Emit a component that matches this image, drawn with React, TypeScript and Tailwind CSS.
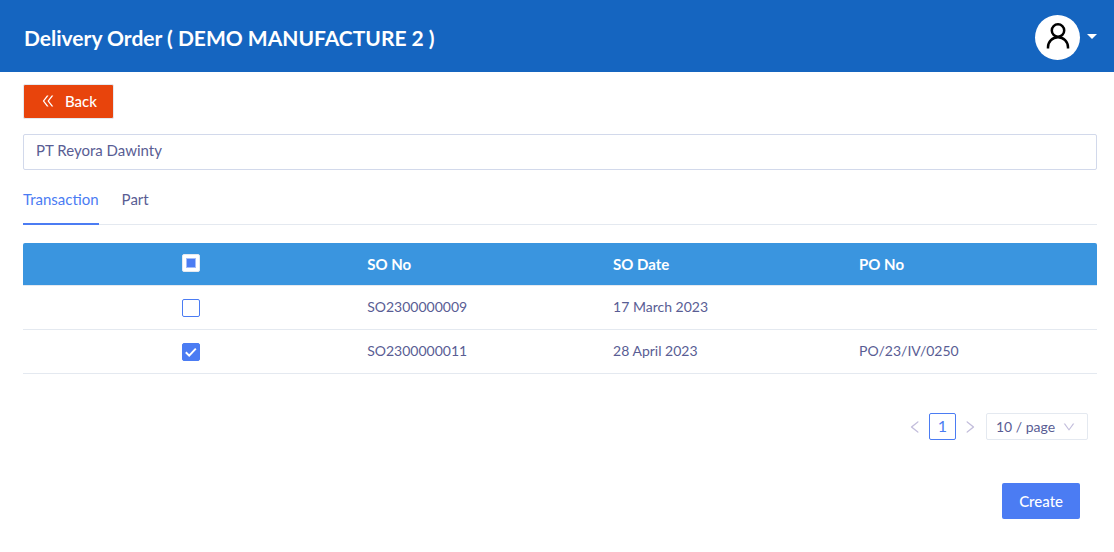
import React, { useState } from "react";
import { AiOutlineDoubleLeft, AiOutlineDown, AiOutlineLeft, AiOutlineRight } from "react-icons/ai";

type SalesOrder = {
    soNo: string;
    soDate: string;
    poNo: string;
};

const orders: SalesOrder[] = [
    { soNo: "SO2300000009", soDate: "17 March 2023", poNo: "" },
    { soNo: "SO2300000011", soDate: "28 April 2023", poNo: "PO/23/IV/0250" },
];

const tabs = ["Transaction", "Part"];

function UserIcon() {
    return (
        <svg width="24" height="30" viewBox="0 0 24 30" fill="none" stroke="black" strokeWidth="2.5" aria-hidden="true">
            <circle cx="12" cy="7.5" r="6.2" />
            <path d="M2 25.5v-1.3a10 10 0 0 1 20 0v1.3" />
        </svg>
    );
}

function CheckBox({ checked, label, onChange }: { checked: boolean; label: string; onChange: () => void }) {
    return (
        <span className="relative mx-auto block size-[18px]">
            <input
                type="checkbox"
                aria-label={label}
                checked={checked}
                onChange={onChange}
                className="block size-[18px] appearance-none rounded-xs border border-[#4b7cf3] bg-white checked:bg-[#4b7cf3]"
            />
            {checked && (
                <svg className="pointer-events-none absolute inset-0" width="18" height="18" viewBox="0 0 18 18" fill="none" stroke="white" strokeWidth="2" aria-hidden="true">
                    <path d="M3.8 9.2l3.4 3.4L13.8 5.6" />
                </svg>
            )}
        </span>
    );
}

export default function DeliveryOrderPage() {
    const [activeTab, setActiveTab] = useState("Transaction");
    const [customer, setCustomer] = useState("PT Reyora Dawinty");
    const [selected, setSelected] = useState<string[]>(["SO2300000011"]);

    const allSelected = selected.length === orders.length;

    const toggle = (soNo: string) => {
        setSelected(selected.includes(soNo) ? selected.filter((s) => s !== soNo) : [...selected, soNo]);
    };

    return (
        <div className="min-h-screen bg-white font-['Lato',sans-serif] text-[15px] leading-5 text-[#595d94]">
            <header className="flex h-18 items-center justify-between bg-[#1565c0] pr-[17px] pl-6">
                <h1 className="pt-1 text-[21px] leading-8 font-bold text-white">Delivery Order ( DEMO MANUFACTURE 2 )</h1>
                <button type="button" aria-label="Account" className="flex items-center gap-[7px] pt-[3px]">
                    <span className="flex size-[45px] items-center justify-center rounded-full bg-white">
                        <UserIcon />
                    </span>
                    <svg width="10" height="8" viewBox="0 0 10 8" fill="white" aria-hidden="true">
                        <path d="M0 0h10L5 5z" />
                    </svg>
                </button>
            </header>

            <main className="pt-3 pr-[17px] pb-8 pl-[23px]">
                <button type="button" className="flex h-[35px] items-center gap-[9px] rounded-xs border border-[#e4e9f0] bg-[#e8440c] px-4 pb-0.5 font-medium text-white">
                    <AiOutlineDoubleLeft size={16} />
                    Back
                </button>

                <input
                    type="text"
                    aria-label="Customer"
                    value={customer}
                    onChange={(e) => setCustomer(e.target.value)}
                    className="mt-[15px] block h-9 w-full rounded-xs border border-[#d2d9eb] px-3 pb-1"
                />

                {/* Tabs */}
                <div role="tablist" className="mt-2 flex gap-[23px] border-b border-[#e4e9f0]">
                    {tabs.map((tab) => (
                        <button
                            key={tab}
                            type="button"
                            role="tab"
                            aria-selected={activeTab === tab}
                            onClick={() => setActiveTab(tab)}
                            className={`-mb-px h-[47px] border-b-2 pb-1 ${activeTab === tab ? "border-[#4b7cf3] text-[#4b7cf3]" : "border-transparent"}`}
                        >
                            {tab}
                        </button>
                    ))}
                </div>

                <table className="mt-[18px] w-full table-fixed border-separate border-spacing-0 text-left">
                    <thead>
                        <tr className="h-[43px] text-white">
                            <th className="w-[31.3%] rounded-tl-xs border-b border-[#e4e9f0] bg-[#3a95df] px-2 pb-0.5">
                                <span className="relative mx-auto block size-[18px]">
                                    <input
                                        type="checkbox"
                                        aria-label="Select all"
                                        checked={allSelected}
                                        onChange={() => setSelected(allSelected ? [] : orders.map((o) => o.soNo))}
                                        className="block size-[18px] appearance-none rounded-xs border border-[#e4e9f0] bg-white"
                                    />
                                    {selected.length > 0 && <span className="pointer-events-none absolute inset-1 border border-[#a5bdf9] bg-[#4b7cf3]" />}
                                </span>
                            </th>
                            <th className="border-b border-[#e4e9f0] bg-[#3a95df] px-2 font-bold">SO No</th>
                            <th className="border-b border-[#e4e9f0] bg-[#3a95df] px-2 font-bold">SO Date</th>
                            <th className="rounded-tr-xs border-b border-[#e4e9f0] bg-[#3a95df] px-2 font-bold">PO No</th>
                        </tr>
                    </thead>
                    <tbody className="text-sm">
                        {orders.map((order) => (
                            <tr key={order.soNo} className="h-11">
                                <td className="border-b border-[#e4e9f0] px-2">
                                    <CheckBox checked={selected.includes(order.soNo)} label={`Select ${order.soNo}`} onChange={() => toggle(order.soNo)} />
                                </td>
                                <td className="border-b border-[#e4e9f0] px-2 pb-0.5">{order.soNo}</td>
                                <td className="border-b border-[#e4e9f0] px-2 pb-0.5">{order.soDate}</td>
                                <td className="border-b border-[#e4e9f0] px-2 pb-0.5">{order.poNo}</td>
                            </tr>
                        ))}
                    </tbody>
                </table>

                {/* Pagination */}
                <div className="mt-[39px] flex items-center justify-end gap-1.5 pr-[9px]">
                    <button type="button" aria-label="Previous page" className="text-[#c3bedc]">
                        <AiOutlineLeft size={16} />
                    </button>
                    <button type="button" aria-current="page" className="h-[27px] w-[27px] rounded-xs border border-[#4b7cf3] pb-0.5 text-base leading-5 text-[#4b7cf3]">
                        1
                    </button>
                    <button type="button" aria-label="Next page" className="text-[#c3bedc]">
                        <AiOutlineRight size={16} />
                    </button>
                    <div className="relative ml-0.5">
                        <select aria-label="Rows per page" className="block h-[27px] w-[102px] appearance-none rounded-xs border border-[#e4e9f0] bg-white pl-[9px] text-sm">
                            <option>10 / page</option>
                            <option>20 / page</option>
                            <option>50 / page</option>
                        </select>
                        <AiOutlineDown size={14} className="pointer-events-none absolute top-[7px] right-3 text-[#c3bedc]" />
                    </div>
                </div>

                <div className="mt-[43px] flex justify-end pr-[17px]">
                    <button type="button" className="h-9 rounded-xs bg-[#4b7cf3] px-[17px] font-medium text-white">
                        Create
                    </button>
                </div>
            </main>
        </div>
    );
}
